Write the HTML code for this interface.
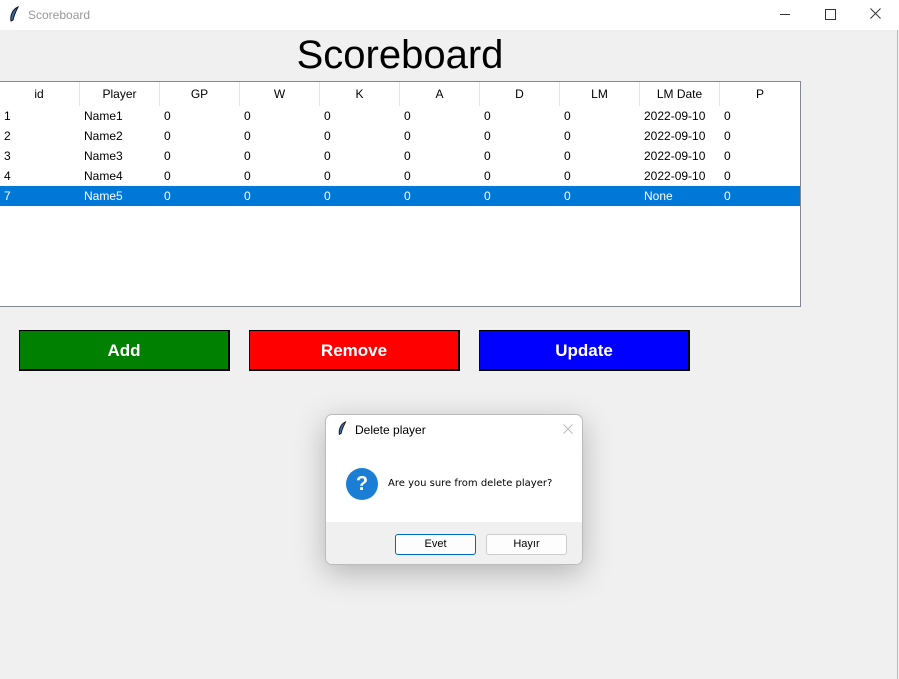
<!DOCTYPE html>
<html><head><meta charset="utf-8"><style>
body{margin:0;width:899px;height:679px;background:#f0f0f0;font-family:"Liberation Sans",sans-serif;position:relative;overflow:hidden}
.abs{position:absolute}
.tb{left:0;top:0;width:899px;height:30px;background:#fff}
.tb span{position:absolute;left:28px;top:8px;font-size:12px;color:#999}
.tbl{left:-2px;top:81px;width:801px;height:224px;background:#fff;border:1px solid #828790}
.hd{position:absolute;top:0;height:24px;border-right:1px solid #e5e5e5;font-size:12px;line-height:24px;text-align:center;color:#000;background:#fff}
.row{position:absolute;left:0;width:801px;height:20px;font-size:12px;line-height:20px}
.row span{position:absolute;top:0}
.sel{background:#0078d7;color:#fff}
.btn{top:330px;width:208px;height:38px;border:1px solid #000;border-width:1px 2px 2px 1px;color:#fff;font-weight:bold;font-size:17px;text-align:center;line-height:40px;font-family:"Liberation Sans",sans-serif}
.dlg{left:325px;top:414px;width:256px;height:149px;background:#fff;border:1px solid #bbb;border-radius:7px;box-shadow:0 8px 30px rgba(0,0,0,.25);overflow:hidden;font-size:12px}
.db{position:absolute;top:119px;width:79px;height:19px;border:1px solid #ccc;border-radius:3px;background:#fdfdfd;text-align:center;line-height:19px;font-size:11px}
</style></head><body>
<div class="abs tb"><svg class="abs" style="left:8px;top:6px" width="12" height="18" viewBox="0 0 12 18"><path d="M10 1 C5 3 2 9 3 15 L5 14 C6 9 8 5 10 1Z" fill="#3a6fb0" stroke="#111" stroke-width="1"/></svg><span>Scoreboard</span>
<div class="abs" style="left:780px;top:14px;width:10px;height:1px;background:#333"></div>
<div class="abs" style="left:825px;top:9px;width:9px;height:9px;border:1px solid #333"></div>
<svg class="abs" style="left:870px;top:8px" width="11" height="11"><path d="M0.5 0.5L10.5 10.5M10.5 0.5L0.5 10.5" stroke="#333" stroke-width="1"/></svg></div>
<div class="abs" style="left:0;top:30px;text-align:center;font-size:40px;line-height:50px;width:800px">Scoreboard</div>
<div class="abs" style="left:897px;top:30px;width:1px;height:649px;background:#bbb"></div>
<div class="abs tbl">
<div class="hd" style="left:0;width:80px">id</div><div class="hd" style="left:81px;width:79px">Player</div><div class="hd" style="left:161px;width:79px">GP</div><div class="hd" style="left:241px;width:79px">W</div><div class="hd" style="left:321px;width:79px">K</div><div class="hd" style="left:401px;width:79px">A</div><div class="hd" style="left:481px;width:79px">D</div><div class="hd" style="left:561px;width:79px">LM</div><div class="hd" style="left:641px;width:79px">LM Date</div><div class="hd" style="left:721px;width:80px;border:0">P</div>
<div class="row" style="top:24px"><span style="left:5px">1</span><span style="left:85px">Name1</span><span style="left:165px">0</span><span style="left:245px">0</span><span style="left:325px">0</span><span style="left:405px">0</span><span style="left:485px">0</span><span style="left:565px">0</span><span style="left:645px">2022-09-10</span><span style="left:725px">0</span></div>
<div class="row" style="top:44px"><span style="left:5px">2</span><span style="left:85px">Name2</span><span style="left:165px">0</span><span style="left:245px">0</span><span style="left:325px">0</span><span style="left:405px">0</span><span style="left:485px">0</span><span style="left:565px">0</span><span style="left:645px">2022-09-10</span><span style="left:725px">0</span></div>
<div class="row" style="top:64px"><span style="left:5px">3</span><span style="left:85px">Name3</span><span style="left:165px">0</span><span style="left:245px">0</span><span style="left:325px">0</span><span style="left:405px">0</span><span style="left:485px">0</span><span style="left:565px">0</span><span style="left:645px">2022-09-10</span><span style="left:725px">0</span></div>
<div class="row" style="top:84px"><span style="left:5px">4</span><span style="left:85px">Name4</span><span style="left:165px">0</span><span style="left:245px">0</span><span style="left:325px">0</span><span style="left:405px">0</span><span style="left:485px">0</span><span style="left:565px">0</span><span style="left:645px">2022-09-10</span><span style="left:725px">0</span></div>
<div class="row sel" style="top:104px"><span style="left:5px">7</span><span style="left:85px">Name5</span><span style="left:165px">0</span><span style="left:245px">0</span><span style="left:325px">0</span><span style="left:405px">0</span><span style="left:485px">0</span><span style="left:565px">0</span><span style="left:645px">None</span><span style="left:725px">0</span></div>
</div>
<div class="abs btn" style="left:19px;background:#008000">Add</div>
<div class="abs btn" style="left:249px;background:#ff0000">Remove</div>
<div class="abs btn" style="left:479px;background:#0000ff">Update</div>
<div class="abs dlg">
<svg class="abs" style="left:10px;top:6px" width="12" height="16" viewBox="0 0 12 18"><path d="M10 1 C5 3 2 9 3 15 L5 14 C6 9 8 5 10 1Z" fill="#3a6fb0" stroke="#111" stroke-width="1"/></svg>
<div class="abs" style="left:29px;top:8px">Delete player</div>
<svg class="abs" style="left:237px;top:9px" width="10" height="10"><path d="M0.5 0.5L9.5 9.5M9.5 0.5L0.5 9.5" stroke="#bbb" stroke-width="1"/></svg>
<div class="abs" style="left:20px;top:53px;width:32px;height:32px;border-radius:50%;background:#1a7fd4;color:#fff;text-align:center;line-height:32px;font-size:20px;font-weight:bold">?</div>
<div class="abs" style="left:62px;top:63px;font-size:10px;font-family:'DejaVu Sans',sans-serif">Are you sure from delete player?</div>
<div class="abs" style="left:0;top:107px;width:256px;height:42px;background:#f0f0f0"></div>
<div class="db" style="left:69px;border-color:#0067c0">Evet</div>
<div class="db" style="left:160px">Hayır</div>
</div>
</body></html>
